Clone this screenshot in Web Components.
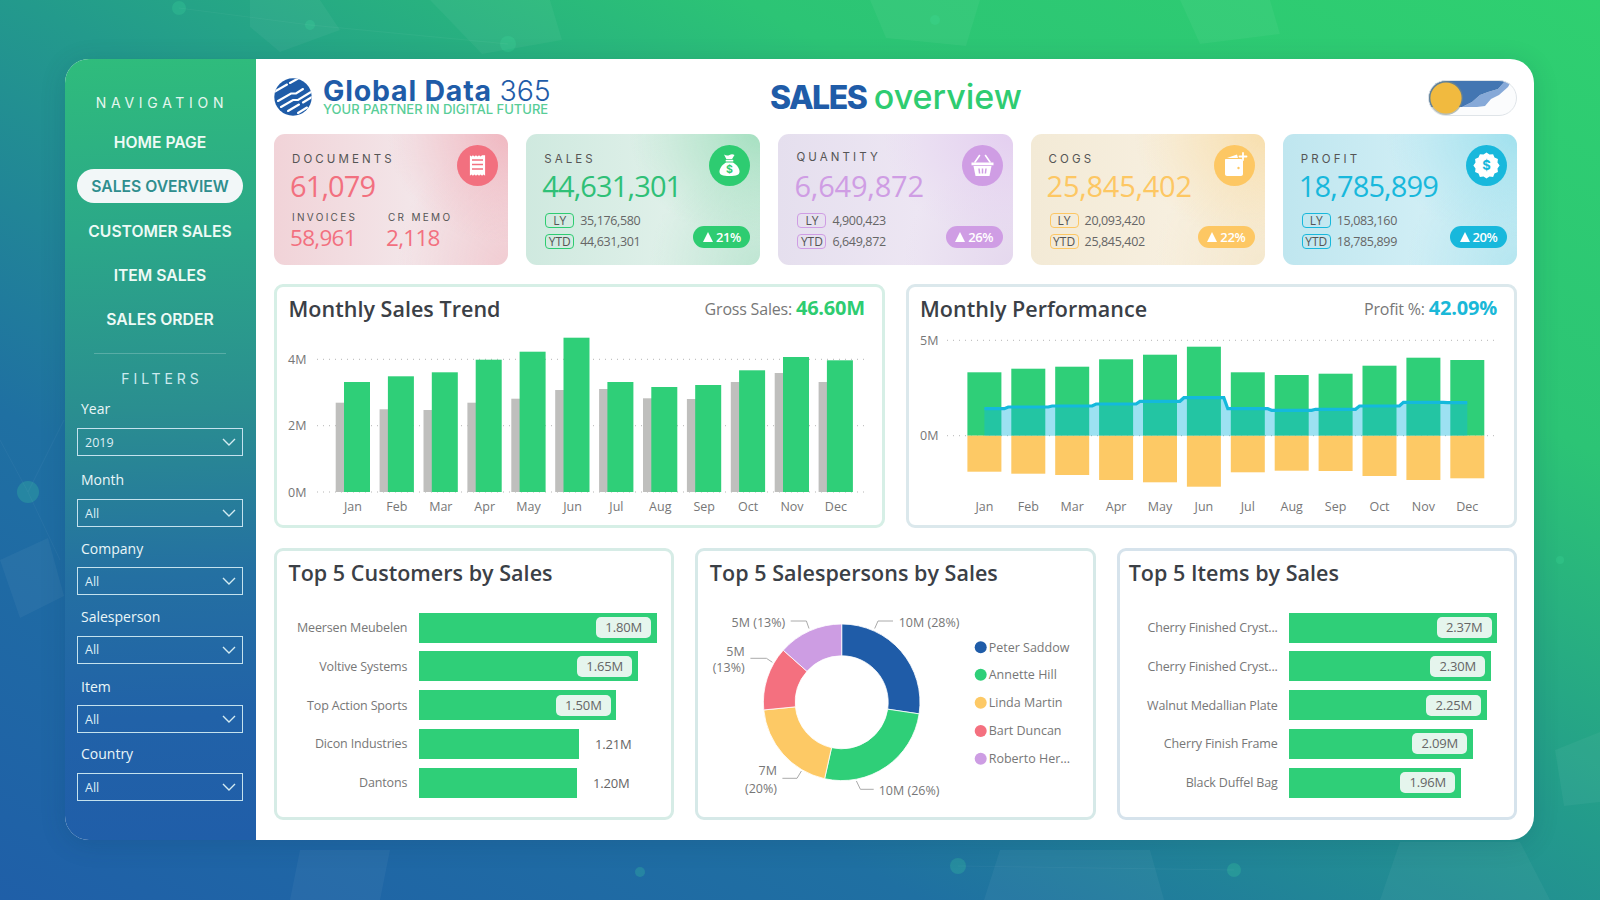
<!DOCTYPE html>
<html><head><meta charset="utf-8"><title>Sales overview</title>
<style>html,body{margin:0;padding:0;width:1600px;height:900px;overflow:hidden;font-family:"Open Sans","Noto Sans",sans-serif}</style>
</head><body>
<dash-stage>
  <side-nav slot="side">
    <nav-item>HOME PAGE</nav-item>
    <nav-item active>SALES OVERVIEW</nav-item>
    <nav-item>CUSTOMER SALES</nav-item>
    <nav-item>ITEM SALES</nav-item>
    <nav-item>SALES ORDER</nav-item>
    <filter-box slot="filters" label="Year" value="2019" style="--mt:11px;--gap:10.3px"></filter-box>
    <filter-box slot="filters" label="Month" value="All" style="--mt:15px;--gap:10px"></filter-box>
    <filter-box slot="filters" label="Company" value="All" style="--mt:13px;--gap:9px"></filter-box>
    <filter-box slot="filters" label="Salesperson" value="All" style="--mt:13px;--gap:9.5px"></filter-box>
    <filter-box slot="filters" label="Item" value="All" style="--mt:14.5px;--gap:9px"></filter-box>
    <filter-box slot="filters" label="Country" value="All" style="--mt:12px;--gap:10px"></filter-box>
  </side-nav>
  <top-bar slot="main"></top-bar>
  <kpi-row slot="main">
    <kpi-card label="DOCUMENTS" value="61,079" accent="#f2707f" icon="doc" style="--bg:radial-gradient(120px 110px at 100% 0,#f0b8c1 0,rgba(240,184,193,0) 100%),radial-gradient(110px 130px at 100% 100%,#f1ccd2 0,rgba(241,204,210,0) 100%),linear-gradient(90deg,#f1d3d8,#f3e6e9 60%)">
      <kpi-split a="INVOICES" av="58,961" b="CR MEMO" bv="2,118"></kpi-split>
    </kpi-card>
    <kpi-card label="SALES" value="44,631,301" accent="#2ecc71" numcolor="#2fc077" icon="bag" badge="21%" style="--bg:radial-gradient(130px 110px at 100% 0,#a6e0c1 0,rgba(166,224,193,0) 100%),radial-gradient(110px 110px at 100% 100%,#bfe6d3 0,rgba(191,230,211,0) 100%),linear-gradient(90deg,#cfe9df,#dff0e9 60%)">
      <kpi-line ly="35,176,580" ytd="44,631,301"></kpi-line>
    </kpi-card>
    <kpi-card label="QUANTITY" value="6,649,872" accent="#cf9de4" icon="basket" badge="26%" style="--lift:2px;--numls:-.17px;--numw:500;--bg:radial-gradient(130px 110px at 100% 0,#e4cff0 0,rgba(228,207,240,0) 100%),radial-gradient(110px 110px at 100% 100%,#e5d8ee 0,rgba(229,216,238,0) 100%),linear-gradient(90deg,#e5dfee,#ede6f3 60%)">
      <kpi-line ly="4,900,423" ytd="6,649,872"></kpi-line>
    </kpi-card>
    <kpi-card label="COGS" value="25,845,402" accent="#fdc763" icon="wallet" badge="22%" style="--numls:-.25px;--numw:500;--bg:radial-gradient(130px 110px at 100% 0,#f8dfae 0,rgba(248,223,174,0) 100%),radial-gradient(110px 110px at 100% 100%,#f5e8cd 0,rgba(245,232,205,0) 100%),linear-gradient(90deg,#f3ead6,#f7efdf 60%)">
      <kpi-line ly="20,093,420" ytd="25,845,402"></kpi-line>
    </kpi-card>
    <kpi-card label="PROFIT" value="18,785,899" accent="#18b8dc" icon="seal" badge="20%" style="--bg:radial-gradient(130px 110px at 100% 0,#a1e1ee 0,rgba(161,225,238,0) 100%),radial-gradient(110px 110px at 100% 100%,#b5e6f0 0,rgba(181,230,240,0) 100%),linear-gradient(90deg,#bfe6ef,#d0eef5 60%)">
      <kpi-line ly="15,083,160" ytd="18,785,899"></kpi-line>
    </kpi-card>
  </kpi-row>
  <chart-row slot="main">
    <chart-card heading="Monthly Sales Trend" note="Gross Sales:" figure="46.60M" figcolor="#2ecc71" style="--edge:#d6efe6"><trend-chart></trend-chart></chart-card>
    <chart-card heading="Monthly Performance" note="Profit %:" figure="42.09%" figcolor="#1ab8d8" style="--edge:#dbe8ec;--tpad:11px"><perf-chart></perf-chart></chart-card>
  </chart-row>
  <top-row slot="main">
    <chart-card low heading="Top 5 Customers by Sales" style="--edge:#d6ece6">
      <bar-list style="--lw:130.3px">
        <bar-row label="Meersen Meubelen" value="1.80M" w="238"></bar-row>
        <bar-row label="Voltive Systems" value="1.65M" w="219"></bar-row>
        <bar-row label="Top Action Sports" value="1.50M" w="197.7"></bar-row>
        <bar-row label="Dicon Industries" value="1.21M" w="160.7" outer></bar-row>
        <bar-row label="Dantons" value="1.20M" w="158.7" outer></bar-row>
      </bar-list>
    </chart-card>
    <chart-card low heading="Top 5 Salespersons by Sales" style="--edge:#d6e9e8"><donut-chart></donut-chart></chart-card>
    <chart-card low heading="Top 5 Items by Sales" style="--edge:#d6e3ec;--tpad:9px">
      <bar-list style="--lw:158px">
        <bar-row label="Cherry Finished Cryst..." value="2.37M" w="208.3"></bar-row>
        <bar-row label="Cherry Finished Cryst..." value="2.30M" w="201.7"></bar-row>
        <bar-row label="Walnut Medallian Plate" value="2.25M" w="197.7"></bar-row>
        <bar-row label="Cherry Finish Frame" value="2.09M" w="183.7"></bar-row>
        <bar-row label="Black Duffel Bag" value="1.96M" w="171.7"></bar-row>
      </bar-list>
    </chart-card>
  </top-row>
</dash-stage>
<script>
const UI='"Open Sans","Noto Sans",sans-serif', HEAD='Inter,"Noto Sans",sans-serif';
function comp(name, render){
  customElements.define(name, class extends HTMLElement{
    constructor(){super();this.attachShadow({mode:'open'});}
    connectedCallback(){this.shadowRoot.innerHTML=render(this);}
  });
}
const attr=(e,n,d='')=>e.hasAttribute(n)?e.getAttribute(n):d;

comp('dash-stage',()=>`<style>
:host{display:block;position:relative;width:1600px;height:900px;box-sizing:border-box;padding:59px 66px 60px 65px;overflow:hidden;
 background:linear-gradient(208deg,#2fd070 0%,#2cc475 26%,#239a8c 48%,#1f70a2 72%,#1f5fa8 100%);font-family:${UI}}
.deco{position:absolute;inset:0}
.panel{position:relative;display:flex;height:781px;border-radius:24px;overflow:hidden;background:#fff;box-shadow:0 4px 26px rgba(10,50,80,.16)}
main{flex:1;min-width:0;box-sizing:border-box;padding:0 17px 20px 18px;display:flex;flex-direction:column}
</style>
<svg class="deco" width="1600" height="900" viewBox="0 0 1600 900">
 <g fill="#fff" opacity=".045">
  <path d="M250 0h70l20 30-60 22-30-25zM430 0h120l12 40-80 14zM870 0h110l-14 46-80-8zM1180 0h90l10 34-80 10zM0 560l48-22 16 58-44 22zM1555 750l45-18v70l-36 4zM1000 850h150l14 50h-180zM300 850h90l-10 50h-90zM1400 842h120l30 58h-170z"/>
 </g>
 <g fill="#3fe0a0" opacity=".22">
  <circle cx="179" cy="8" r="7"/><circle cx="310" cy="25" r="5"/><circle cx="508" cy="44" r="8"/><circle cx="28" cy="492" r="11"/><circle cx="935" cy="20" r="5"/>
  <circle cx="958" cy="866" r="8"/><circle cx="1234" cy="870" r="7"/><circle cx="640" cy="872" r="5"/><circle cx="1560" cy="560" r="4"/>
 </g>
 <g stroke="#fff" stroke-width="1" opacity=".04" fill="none"><path d="M0 440L28 492 60 560M28 492L64 420M179 8L310 25 508 44M958 866L1234 870"/></g>
</svg>
<div class="panel"><slot name="side"></slot><main><slot name="main"></slot></main></div>`);

comp('side-nav',()=>`<style>
:host{display:block;flex:0 0 191px;width:191px;box-sizing:border-box;padding:34px 13px 0 12px;color:#fff;
 background:linear-gradient(178deg,#2fbc7c 0%,#2ba888 22%,#2a8e90 45%,#2470a2 66%,#2162a8 84%,#205ea9 100%)}
h2{margin:0;font:400 14px/20px ${HEAD};letter-spacing:4.7px;text-align:center;color:#e4f6ef;padding-left:4px}
.items{display:flex;flex-direction:column;gap:10.3px;margin-top:12px}
hr{border:0;height:1px;background:rgba(255,255,255,.22);margin:17px 17px 0 17px}
h2.f{margin-top:15px;color:#cdeaee;letter-spacing:3.9px}
</style><h2>NAVIGATION</h2><div class="items"><slot></slot></div><hr><h2 class="f">FILTERS</h2><slot name="filters"></slot>`);

comp('nav-item',e=>`<style>
:host{display:block;height:34px;border-radius:17px;text-align:center;font:600 15.7px/35px ${HEAD};letter-spacing:0;color:#eefaf6;white-space:nowrap}
:host([active]){background:#f2f7f8;color:#2f8e8e}
</style><slot></slot>`);

comp('filter-box',e=>`<style>
:host{display:block;margin-top:var(--mt,14px);color:#eaf6f8}
.l{font:400 14px/18px ${UI};padding-left:4px;margin-bottom:var(--gap,8px)}
.d{box-sizing:border-box;height:28px;display:flex;align-items:center;justify-content:space-between;border:1.5px solid #c4e2ee;padding:0 6px 0 7px;font:400 12.5px ${UI};color:#dfeef5}
svg{display:block}
</style><div class="l">${attr(e,'label')}</div><div class="d"><span>${attr(e,'value')}</span>
<svg width="14" height="8" viewBox="0 0 14 8"><path d="M1 1l6 6 6-6" fill="none" stroke="#d4ecf2" stroke-width="1.4"/></svg></div>`);

comp('top-bar',()=>`<style>
:host{display:flex;align-items:center;height:75px;flex:none;position:relative}
.logo{display:flex;align-items:center;gap:11px;margin-top:1px;width:496px;flex:none}
.t1{font:700 28.5px/25px ${HEAD};letter-spacing:.8px;color:#1f5ca8;white-space:nowrap}
.t1 span{font-weight:300;letter-spacing:0}
.t2{font:500 13px/13px ${HEAD};letter-spacing:0;color:#58cd97;white-space:nowrap}
.title{font:800 32px/40px ${HEAD};color:#1f5ca8;letter-spacing:-1.5px;white-space:nowrap;margin-top:1px}
.title span{font-weight:500;font-size:34px;color:#2ecc71;letter-spacing:0;margin-left:2px}
.tg{margin-left:auto;flex:none;display:block;margin-top:3px}
</style>
<div class="logo">
<svg width="38" height="38" viewBox="0 0 38 38"><defs><clipPath id="c"><circle cx="19" cy="19" r="18.7"/></clipPath></defs>
<circle cx="19" cy="19" r="18.7" fill="#1f5ca8"/>
<g clip-path="url(#c)" fill="none" stroke="#fff" stroke-width="2.1" stroke-linecap="round">
<path d="M0 14L13 6.500"/><path d="M16 5L24 .5"/><path d="M4 23L17 15.500H22L29 11"/><path d="M7 29L19 22H24L37 14"/><path d="M14 33L25 26.500"/><path d="M29 24.500L38 19"/><path d="M24 35L33 29.500"/>
</g></svg>
<div><div class="t1">Global Data <span>365</span></div><div class="t2">YOUR PARTNER IN DIGITAL FUTURE</div></div></div>
<div class="title">SALES <span>overview</span></div>
<svg class="tg" width="89" height="36" viewBox="0 0 89 36"><defs><clipPath id="t"><rect x=".5" y=".5" width="88" height="35" rx="17.5"/></clipPath></defs>
<g clip-path="url(#t)"><rect width="89" height="36" fill="#fbfcfd"/>
<path d="M34 27L44 22 52 15 60 12 70 9 78 0H84L80 7 71 15 63 19 57 26 49 27 42 27Z" fill="#86a9d8"/>
<path d="M0 0H78L70 9 60 12 52 15 44 22 34 27H0Z" fill="#4376b2"/></g>
<rect x=".5" y=".5" width="88" height="35" rx="17.5" fill="none" stroke="#dfe4e8"/>
<circle cx="18" cy="18" r="17" fill="#7d8a80" opacity=".55"/><circle cx="18" cy="18" r="15.6" fill="#f1ba3f"/></svg>`);

comp('kpi-row',()=>`<style>:host{display:grid;grid-template-columns:repeat(5,minmax(0,1fr));gap:18px;height:131px;flex:none}</style><slot></slot>`);

const SVGF=HEAD.replace(/"/g,"'");
const ICONS={
doc:`<path d="M12 9.5l1.6 1.2L15.2 9.5l1.6 1.2 1.6-1.2 1.6 1.2 1.6-1.2 1.6 1.2L24.8 9.5 28 9.5V31l-1.6-1.2L24.8 31l-1.6-1.2-1.6 1.2-1.6-1.2-1.6 1.2-1.6-1.2L15.2 31l-1.6-1.2L12 31z" fill="#fff" transform="translate(20.5 20.5) scale(.95) translate(-20 -20.2)"/><g stroke="#f2707f" stroke-width="1.7"><path d="M15 15h11M15 19.5h11M15 24h11"/></g>`,
bag:`<path d="M15 9.5c2 1.2 3.8 1.2 5.5.4 1.8-.8 3.5-.8 5 .1l-2.4 4h-5.8z" fill="#fff"/><rect x="16.6" y="14.8" width="7.8" height="1.8" rx=".9" fill="#fff"/><path d="M17 17.5h7c4 2.2 6.5 6 6.5 9 0 3.6-3 4.5-10 4.500s-10-.9-10-4.500c0-3 2.500-6.800 6.500-9z" fill="#fff"/><text x="20.500" y="28.300" text-anchor="middle" font-family="${SVGF}" font-size="10.500" font-weight="700" fill="#2ecc71">$</text>`,
basket:`<path d="M9.500 17.500h22v2.800h-22z" fill="#fff"/><path d="M11.500 21h18l-2 10h-14z" fill="#fff"/><path d="M13 17l4.500-6.500M28 17l-4.500-6.500" stroke="#fff" stroke-width="1.600" stroke-linecap="round"/><path d="M17 23.500l.6 5M20.500 23.500v5M24 23.500l-.6 5" stroke="#cf9de4" stroke-width="1.500"/>`,
wallet:`<path d="M12 14h15c1.100 0 2 .9 2 2v13c0 1.100-.9 2-2 2H13c-1.100 0-2-.9-2-2V15c0-.6.4-1 1-1z" fill="#fff"/><path d="M13 13l10-3.500 1 3.500z" fill="#fff"/><path d="M29 8v7M25.500 11.500h7" stroke="#fff" stroke-width="1.800" stroke-linecap="round"/><circle cx="24.500" cy="23" r="1.200" fill="#fdc763"/>`,
seal:`<path d="M20.500 8l3.200 2.300 3.900-.5 1.500 3.700 3.700 1.500-.5 3.900 2.300 3.100-2.300 3.200.5 3.900-3.700 1.500-1.500 3.700-3.900-.5-3.200 2.300-3.200-2.300-3.900.5-1.500-3.700-3.700-1.500.5-3.900-2.300-3.200 2.300-3.100-.5-3.900 3.700-1.500 1.500-3.700 3.900.5z" fill="#fff" transform="translate(20.500 20.500) scale(.93) translate(-20.500 -22)"/><text x="20.500" y="25.300" text-anchor="middle" font-family="${SVGF}" font-size="13" font-weight="700" fill="#18b8dc">$</text>`
};

comp('kpi-card',e=>{const a=attr(e,'accent'),nc=attr(e,'numcolor',a),b=attr(e,'badge');return `<style>
:host{display:flex;justify-content:space-between;box-sizing:border-box;min-width:0;border-radius:11px;background:var(--bg);--accent:${a}}
.l{box-sizing:border-box;padding:calc(18px - var(--lift,0px)) 0 0 18px;flex:1;min-width:0}
.lab{font:400 11.5px/14px ${HEAD};letter-spacing:3.1px;color:#555}
.num{font:var(--numw,400) 29px/36px ${UI};letter-spacing:var(--numls,-.85px);color:${nc};margin:calc(1.7px + var(--lift,0px)) 0 0 -2px;white-space:nowrap}
.r{box-sizing:border-box;display:flex;flex-direction:column;align-items:flex-end;padding:11px 10px 16.7px 0;flex:none}
svg{display:block}
.b{margin-top:auto;height:22.6px;width:57px;border-radius:11.3px;background:${a};color:#fff;font:600 13px/22.6px ${UI};letter-spacing:-.4px;display:flex;align-items:center;justify-content:center;gap:3px}
.b i{width:0;height:0;border:5.500px solid transparent;border-top:0;border-bottom:10px solid #fff}
</style><div class="l"><div class="lab">${attr(e,'label')}</div><div class="num">${attr(e,'value')}</div><slot></slot></div>
<div class="r"><svg width="41" height="41" viewBox="0 0 41 41"><circle cx="20.500" cy="20.500" r="20.500" fill="${a}"/>${ICONS[attr(e,'icon')]}</svg>${b?`<div class="b"><i></i>${b}</div>`:''}</div>`});

comp('kpi-split',e=>`<style>
:host{display:flex;margin-top:7.300px;color:#f2707f}
div{flex:none}div:first-child{width:96px}
.a{font:400 10px/12px ${HEAD};letter-spacing:2.300px;color:#555}
.v{font:400 22.500px/26px ${UI};letter-spacing:-.7px;margin:2px 0 0 -2px}
</style><div><div class="a">${attr(e,'a')}</div><div class="v">${attr(e,'av')}</div></div><div><div class="a">${attr(e,'b')}</div><div class="v">${attr(e,'bv')}</div></div>`);

comp('kpi-line',e=>`<style>
:host{display:flex;flex-direction:column;gap:6px;margin:9px 0 0 1px}
.r{display:flex;align-items:center;gap:6px;font:400 12.500px/15.300px ${UI};letter-spacing:-.35px;color:#666;white-space:nowrap}
.c{box-sizing:border-box;width:29px;height:15.300px;border:1px solid var(--accent);border-radius:4px;text-align:center;font:400 12px/13.300px ${UI};letter-spacing:0;color:#555}
</style><div class="r"><span class="c">LY</span>${attr(e,'ly')}</div><div class="r"><span class="c">YTD</span>${attr(e,'ytd')}</div>`);

comp('chart-row',()=>`<style>:host{display:grid;grid-template-columns:repeat(2,minmax(0,1fr));gap:21px;height:244px;flex:none;margin-top:19px}</style><slot></slot>`);
comp('top-row',()=>`<style>:host{display:grid;grid-template-columns:repeat(3,minmax(0,1fr));gap:21px;height:272px;flex:none;margin-top:20px}</style><slot></slot>`);

comp('chart-card',e=>{const low=e.hasAttribute('low'),n=attr(e,'note');return `<style>
:host{display:flex;flex-direction:column;box-sizing:border-box;min-width:0;border:3px solid var(--edge);border-radius:9px;background:#fff}
header{flex:none;height:${low?49:45}px;box-sizing:border-box;display:flex;justify-content:space-between;align-items:center;padding:0 17px ${low?5:1}px var(--tpad,11.500px)}
h3{margin:0;font:600 21.500px/28px ${UI};letter-spacing:.03px;color:#3b4046;white-space:nowrap}
.n{font:400 16px/24px ${UI};letter-spacing:-.2px;color:#777;white-space:nowrap;margin-top:-2px}
.n b{font:700 20px/24px ${UI};letter-spacing:-.2px;color:${attr(e,'figcolor')}}
.body{flex:1;min-height:0}
</style><header><h3>${attr(e,'heading')}</h3>${n?`<div class="n">${n} <b>${attr(e,'figure')}</b></div>`:''}</header><div class="body"><slot></slot></div>`});

const MONTHS=['Jan','Feb','Mar','Apr','May','Jun','Jul','Aug','Sep','Oct','Nov','Dec'];
const svgCss=`:host{display:block;width:100%;height:100%}svg{display:block;width:100%;height:100%;font-family:${UI}}text{font-size:12.500px;fill:#777}`;

comp('trend-chart',()=>{
 const g=[382,376.3,372.3,359.7,351.7,337.7,382,387,385,370.3,357,360.3], y=[402.7,409.3,410,402.7,398.7,390,389,398.3,399,382,373,382];
 const grid=[[359.3,'4M'],[425.7,'2M'],[492,'0M']].map(([v,t])=>`<line x1="317" x2="867" y1="${v}" y2="${v}" stroke="#b5b5b5" stroke-dasharray="1 5"/><text x="288" y="${v+4.500}">${t}</text>`).join('');
 let s='';MONTHS.forEach((m,i)=>{const x=344+i*43.9;
  s+=`<rect x="${x-8.300}" y="${y[i]}" width="26" height="${492-y[i]}" fill="#bfbfbd"/><rect x="${x}" y="${g[i]}" width="26" height="${492-g[i]}" fill="#2fcf78"/><text x="${x+9}" y="511" text-anchor="middle">${m}</text>`;});
 return `<style>${svgCss}</style><svg viewBox="277 332 605 193" preserveAspectRatio="xMinYMin">${grid}${s}</svg>`;
});

comp('perf-chart',()=>{
 const top=[277,266,260,238,224,200,277,285,281,257,233,240], bot=[575,581,585,600,607,620,577,572,573,588,600,595], ln=[386,381,378,372,364,353,386,391,388,378,367,368];
 const Y=p=>+(280+p/3).toFixed(1), Z=435.700;
 const grid=[[340.3,'5M'],[Z,'0M']].map(([v,t])=>`<line x1="947" x2="1499" y1="${v}" y2="${v}" stroke="#b5b5b5" stroke-dasharray="1 5"/><text x="920" y="${v+4.500}">${t}</text>`).join('');
 let s='',pts=[];const c=i=>984.4+i*43.9;
 MONTHS.forEach((m,i)=>{const x=c(i)-17;
  s+=`<rect x="${x}" y="${Y(top[i])}" width="34" height="${Z-Y(top[i])}" fill="#2fcf78"/><rect x="${x}" y="${Z}" width="34" height="${Y(bot[i])-Z}" fill="#fdc965"/><text x="${c(i)}" y="511" text-anchor="middle">${m}</text>`;
  if(i==0)pts.push([c(0)-0,Y(ln[0])]);
  if(i>0){const mx=c(i)-22;pts.push([mx-2,Y(ln[i-1])]);pts.push([mx+2,Y(ln[i])]);}
 });
 pts.push([c(11),Y(ln[11])]);
 const line=pts.map(p=>p.join(',')).join(' ');
 const area=`${pts[0][0]},${Z} ${line} ${c(11)},${Z}`;
 return `<style>${svgCss}</style><svg viewBox="909 332 605 193" preserveAspectRatio="xMinYMin">${grid}${s}<polygon points="${area}" fill="#12b8e0" opacity=".42"/><polyline points="${line}" fill="none" stroke="#14b9dc" stroke-width="3.200"/></svg>`;
});

comp('donut-chart',()=>{
 const cx=842,cy=702.3,R=78.3,r=46.5,ang=[0,98.5,192.6,264.4,311.7,360],col=['#1f5ca8','#2fcf78','#fdc965','#f4707f','#cd9de3'];
 const P=(a,q)=>{const t=(a-90)*Math.PI/180;return (cx+q*Math.cos(t)).toFixed(2)+' '+(cy+q*Math.sin(t)).toFixed(2)};
 let s='';for(let i=0;i<5;i++){const a=ang[i],b=ang[i+1],l=b-a>180?1:0;
  s+=`<path d="M${P(a,R)}A${R} ${R} 0 ${l} 1 ${P(b,R)}L${P(b,r)}A${r} ${r} 0 ${l} 0 ${P(a,r)}Z" fill="${col[i]}" stroke="#fff" stroke-width=".8"/>`;}
 const L=(d)=>`<path d="${d}" fill="none" stroke="#aaa" stroke-width="1"/>`;
 const T=(x,y,t,anc='start')=>`<text x="${x}" y="${y}" text-anchor="${anc}">${t}</text>`;
 const names=['Peter Saddow','Annette Hill','Linda Martin','Bart Duncan','Roberto Her...'],ly=[647.3,674.7,702.7,731,758.700];
 const leg=names.map((n,i)=>`<circle cx="981" cy="${ly[i]}" r="6" fill="${col[i]}"/><text x="989" y="${ly[i]+4.300}">${n}</text>`).join('');
 return `<style>${svgCss}</style><svg viewBox="698.3 600 394.300 217" preserveAspectRatio="xMinYMin">${s}
 ${L('M875 628.500L878.300 621H893.300')}${T(899,627,'10M (28%)')}
 ${L('M791 621H806.700L809.300 628.500')}${T(785.500,627,'5M (13%)','end')}
 ${L('M750.700 658.300H766.700L772.700 662.300')}${T(745,655.500,'5M','end')}${T(745,672,'(13%)','end')}
 ${L('M782.700 778.300H797.300L801.700 771')}${T(777.300,775,'7M','end')}${T(777.300,792.500,'(20%)','end')}
 ${L('M856.700 781L860.700 789.300H874')}${T(879,795,'10M (26%)')}
 ${leg}</svg>`;
});

comp('bar-list',()=>`<style>:host{display:flex;flex-direction:column;gap:8.750px;padding-top:12.700px}</style><slot></slot>`);
comp('bar-row',e=>{const out=e.hasAttribute('outer');return `<style>
:host{display:flex;align-items:center;height:30px;font:400 12.500px ${UI};letter-spacing:-.15px;color:#777;white-space:nowrap}
.n{flex:none;width:var(--lw);text-align:right;margin-right:11.400px}
.bar{flex:none;height:30px;width:${attr(e,'w')}px;background:#2fcf78;display:flex;align-items:center;justify-content:flex-end;padding-right:5.500px;box-sizing:border-box}
.chip{width:55px;height:21px;border-radius:5px;background:#e5f5ed;text-align:center;font-size:13px;line-height:21px;color:#666}
.o{margin-left:15.500px;font-size:13px;color:#666}
</style><div class="n">${attr(e,'label')}</div><div class="bar">${out?'':`<div class="chip">${attr(e,'value')}</div>`}</div>${out?`<div class="o">${attr(e,'value')}</div>`:''}`});
</script>
</body></html>
